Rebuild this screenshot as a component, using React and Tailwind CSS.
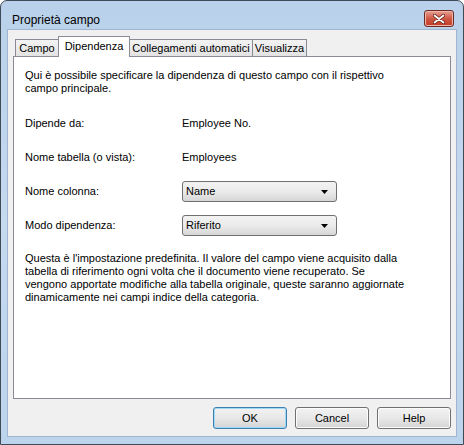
import React from 'react';

const font = { fontFamily: '"Liberation Sans", Arial, sans-serif' };

const tabs = [
  { label: 'Campo', w: 'w-[44px]' },
  { label: 'Dipendenza', w: 'w-[72px]', active: true },
  { label: 'Collegamenti automatici', w: 'w-[124px]' },
  { label: 'Visualizza', w: 'w-[55px]' },
];

const Dropdown = ({ value }) => (
  <div className="w-[155px] h-[21px] flex items-center justify-between pl-[3px] pr-[8px] rounded-[3px] border border-[#707070] bg-gradient-to-b from-[#f2f2f2] via-[#ebebeb] to-[#d6d6d6] text-[11px] text-black">
    <span>{value}</span>
    <svg width="7" height="4" viewBox="0 0 7 4">
      <path d="M0 0h7L3.5 4z" fill="#000" />
    </svg>
  </div>
);

const Button = ({ label, primary }) => (
  <button
    className={
      'w-[74px] h-[22px] rounded-[3px] text-[11px] text-black bg-gradient-to-b from-[#f2f2f2] via-[#e8e8e8] to-[#d4d4d4] ' +
      (primary
        ? 'border border-[#3c7fb1] shadow-[inset_0_0_0_1px_#9fd8f5]'
        : 'border border-[#707070] shadow-[inset_0_0_0_1px_#fcfcfc]')
    }
  >
    {label}
  </button>
);

const Row = ({ label, children }) => (
  <div className="flex items-center h-[21px]">
    <div className="w-[157px]">{label}</div>
    {children}
  </div>
);

export default function App() {
  return (
    <div
      className="w-[464px] h-[445px] flex flex-col border border-[#404a56] rounded-t-[7px] bg-gradient-to-b from-[#b9d1ea] via-[#c5d9ef] to-[#bcd4ec] overflow-hidden"
      style={font}
    >
      {/* title bar */}
      <div className="h-[28px] flex items-start justify-between pl-[11px] pr-[9px]">
        <span className="text-[12px] text-black mt-[13px] leading-none">Proprietà campo</span>
        <div className="mt-[9px] w-[30px] h-[17px] rounded-[3px] border border-[#6b2a22] bg-gradient-to-b from-[#e8a093] via-[#cf5844] to-[#c23a23] flex items-center justify-center shadow-[inset_0_0_0_1px_#eeb6aa]">
          <svg width="12" height="10" viewBox="0 0 12 10">
            <path d="M1.5 1.5l9 7M10.5 1.5l-9 7" stroke="#5a1f18" strokeWidth="3.4" strokeLinecap="round" />
            <path d="M1.5 1.5l9 7M10.5 1.5l-9 7" stroke="#fff" strokeWidth="1.8" strokeLinecap="round" />
          </svg>
        </div>
      </div>

      {/* client area */}
      <div className="flex-1 mx-[6px] mb-[7px] border border-[#9fb5d2] bg-[#f0f0f0] flex flex-col pt-[6px] px-[5px] text-[11px] text-black">
        <div className="flex items-end h-[20px] pl-[2px]">
          {tabs.map((t) =>
            t.active ? (
              <div
                key={t.label}
                className={`${t.w} h-[21px] -mb-px -ml-px relative z-10 border border-b-0 border-[#898c95] bg-white flex items-center justify-center pb-[2px]`}
              >
                {t.label}
              </div>
            ) : (
              <div
                key={t.label}
                className={`${t.w} h-[17px] pt-px border border-b-0 border-[#898c95] bg-gradient-to-b from-[#f3f3f3] to-[#e3e3e3] flex items-center justify-center -ml-px first:ml-0`}
              >
                {t.label}
              </div>
            )
          )}
        </div>

        <div className="h-[343px] border border-[#898c95] bg-white pt-[12px] pl-[11px] leading-[13px]">
          <p>
            Qui è possibile specificare la dipendenza di questo campo con il rispettivo
            <br />
            campo principale.
          </p>

          <div className="mt-[18px] flex flex-col gap-[13px]">
            <Row label="Dipende da:">Employee No.</Row>
            <Row label="Nome tabella (o vista):">Employees</Row>
            <Row label="Nome colonna:">
              <Dropdown value="Name" />
            </Row>
            <Row label="Modo dipendenza:">
              <Dropdown value="Riferito" />
            </Row>
          </div>

          <p className="mt-[16px]">
            Questa è l'impostazione predefinita. Il valore del campo viene acquisito dalla
            <br />
            tabella di riferimento ogni volta che il documento viene recuperato. Se
            <br />
            vengono apportate modifiche alla tabella originale, queste saranno aggiornate
            <br />
            dinamicamente nei campi indice della categoria.
          </p>
        </div>

        <div className="flex justify-end gap-[8px] mt-[8px]">
          <Button label="OK" primary />
          <Button label="Cancel" />
          <Button label="Help" />
        </div>
      </div>
    </div>
  );
}
